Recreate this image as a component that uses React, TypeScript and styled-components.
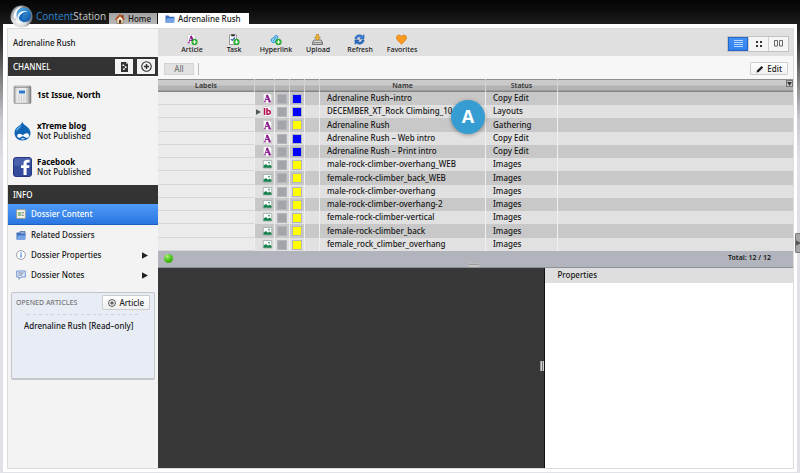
import React from "react";
import styled, { createGlobalStyle, css } from "styled-components";

const Global = createGlobalStyle`
  * { box-sizing: border-box; }
  html, body { margin: 0; padding: 0; }
  body {
    font-family: "Noto Sans", "Open Sans", sans-serif;
    font-size: 8px;
    font-weight: 500;
    line-height: 10px;
    color: #161616;
  }
  button {
    font: inherit;
    color: inherit;
    margin: 0;
    padding: 0;
    border: 0;
    background: none;
    cursor: pointer;
  }
  h2, p, ul { margin: 0; padding: 0; font: inherit; }
  ul { list-style: none; }
  svg { display: block; flex: none; }
`;

const Page = styled.div`
  position: relative;
  min-height: 100vh;
  display: flex;
  flex-direction: column;
  padding: 0 3px 1px;
  background: linear-gradient(#050505 0, #0c0c0c 10px, #1e1e1e 24px, #3a3a3a 45px, #8a8b8d 85px, #c9cace 120px, #dfe1e6 160px);
`;

const TopBar = styled.header`
  display: flex;
  align-items: flex-end;
  height: 24px;
  padding-left: 6px;
`;

const Brand = styled.div`
  display: flex;
  align-items: center;
  width: 100px;
  height: 16px;
  gap: 3px;
  font-family: "Open Sans", sans-serif;
  font-size: 10px;
  line-height: 14px;
  color: #c8c8c8;
  white-space: nowrap;
  svg { position: relative; z-index: 1; }
  b { font-weight: 500; color: #2e86cf; }
`;

const Tab = styled.button<{ $active?: boolean }>`
  display: flex;
  align-items: center;
  gap: 3px;
  height: 11px;
  white-space: nowrap;
  ${(p) =>
    p.$active
      ? css`width: 91px; margin-left: 1px; padding-left: 7px; background: #fff;`
      : css`width: 48px; padding-left: 6px; background: linear-gradient(#a2a2a2, #b8b8b8);`}
`;

const Frame = styled.div`
  flex: 1;
  display: flex;
  padding: 4px 3px 3px 4px;
  background: #fff;
`;

const Workspace = styled.div`
  flex: 1;
  min-width: 0;
  display: flex;
  border: 1px solid #dcdcdc;
`;

const Sidebar = styled.aside`
  width: 150px;
  flex: none;
  background: #f3f3f3;
`;

const SideTitle = styled.h2`
  height: 28px;
  padding-left: 5px;
  line-height: 27px;
`;

const SectionBar = styled.div`
  display: flex;
  align-items: center;
  gap: 4px;
  height: 19px;
  padding: 0 3px 0 5px;
  background: #333;
  color: #fff;
  h2 { flex: 1; }
`;

const BarButton = styled.button`
  display: grid;
  place-items: center;
  width: 18px;
  height: 15px;
  background: #f3f3f3;
`;

const Channels = styled.ul`
  height: 109px;
  border-top: 1px solid #fff;
`;

const Channel = styled.li`
  display: flex;
  align-items: center;
  gap: 5px;
  height: 36px;
  padding-left: 5px;
  b { display: block; color: #000; }
`;

const NavButton = styled.button<{ $selected?: boolean }>`
  display: flex;
  align-items: center;
  gap: 5px;
  width: 100%;
  height: 20px;
  padding: 0 10px 0 8px;
  text-align: left;
  span { flex: 1; }
  ${(p) =>
    p.$selected &&
    css`
      height: 21px;
      color: #fff;
      background: linear-gradient(#4f9bf8, #2a76e0);
      border-bottom: 1px solid #1f5fc0;
    `}
`;

const OpenedBox = styled.section`
  height: 88px;
  margin: 7px 3px 0;
  padding: 2px 4px;
  border: 1px solid #c4c6cc;
  border-bottom-width: 2px;
  border-radius: 2px;
  background: #e8ecf5;
  p { padding: 6px 8px; }
`;

const OpenedHead = styled.div`
  display: flex;
  align-items: center;
  justify-content: space-between;
  color: #777;
  font-size: 7px;
`;

const LightButton = styled.button`
  display: flex;
  align-items: center;
  justify-content: center;
  gap: 3px;
  height: 15px;
  padding: 0 5px;
  border: 1px solid #cdcdcd;
  border-radius: 1px;
  background: linear-gradient(#fff, #f0f0f0);
  color: #222;
  font-size: 8px;
`;

const Dashes = styled.div`
  margin: 4px 10px 0 11px;
  height: 1px;
  background: repeating-linear-gradient(90deg, #cdd0d8 0 3px, transparent 3px 6px);
`;

const Main = styled.main`
  flex: 1;
  min-width: 0;
  display: flex;
  flex-direction: column;
`;

const Toolbar = styled.div`
  display: flex;
  align-items: center;
  height: 27px;
  padding: 2px 4px 0 13px;
  background: #e0e0e0;
`;

const Tool = styled.button`
  display: flex;
  flex-direction: column;
  align-items: center;
  width: 42px;
  padding-top: 2px;
  font-size: 7px;
  line-height: 10px;
`;

const ViewSwitch = styled.div`
  display: flex;
  margin-left: auto;
  border: 1px solid #c3c3c3;
`;

const ViewButton = styled.button<{ $on?: boolean }>`
  display: grid;
  place-items: center;
  width: 20px;
  height: 14px;
  background: ${(p) => (p.$on ? "linear-gradient(#4492f5, #2f7ff0)" : "#f5f5f5")};
  box-shadow: ${(p) => (p.$on ? "inset 0 0 0 1px #2467c4" : "none")};
  & + & { border-left: 1px solid #cfcfcf; }
`;

const FilterBar = styled.div`
  display: flex;
  align-items: center;
  height: 23px;
  padding: 2px 5px 0 6px;
  background: #f7f7f7;
`;

const AllButton = styled.button`
  width: 30px;
  height: 12px;
  border: 1px solid #d3d3d3;
  background: #e2e2e2;
  color: #777;
  line-height: 10px;
`;

const Divider = styled.span`
  width: 1px;
  height: 12px;
  margin-left: 4px;
  background: #bdbdbd;
`;

const EditButton = styled(LightButton)`
  height: 13px;
  margin-left: auto;
`;

const TableArea = styled.div`
  position: relative;
`;

const Files = styled.table`
  width: 100%;
  table-layout: fixed;
  border-collapse: separate;
  border-spacing: 0;
  th, td { padding: 0; overflow: hidden; white-space: nowrap; }
  th {
    height: 13px;
    font-size: 7px;
    line-height: 9px;
    font-weight: 600;
    color: #333;
    background: linear-gradient(#8f8f8f 0 1px, #cacaca 1px 6px, #b3b3b3 7px 11px, #858585 12px);
    border-right: 1px solid #d3d3d3;
  }
  th:last-child { border-right: 0; text-align: right; }
`;

const Row = styled.tr`
  height: 13px;
  background: #e1e1e1;
  &:nth-child(odd) { background: #c8c8c8; }
  &:nth-child(4n + 3) { height: 14px; }
  td { border-right: 1px solid #efefef; line-height: 11px; }
  td:first-child { background: #ebebeb; border-bottom: 1px solid #d6d6d6; }
  td:last-child { border-right: 0; }
`;

const TextCell = styled.td`
  && { padding: 0 0 2px 7px; }
`;

const IconLine = styled.div`
  display: flex;
  align-items: center;
  justify-content: flex-end;
  gap: 1px;
  padding-right: 1px;
`;

const Swatch = styled.i<{ $color: string }>`
  display: block;
  width: 10px;
  height: 10px;
  margin: 0 auto;
  border: 1px solid #b4b4bc;
  background: ${(p) => p.$color};
`;

const MenuButton = styled.button`
  display: grid;
  place-items: center;
  width: 7px;
  height: 7px;
  margin: 0 0 4px auto;
  border: 1px solid #777;
  background: #c6c6c6;
`;

const Marker = styled.div`
  position: absolute;
  top: 21px;
  left: 293px;
  width: 34px;
  height: 34px;
  border-radius: 50%;
  background: #369dd2;
  box-shadow: 0 1px 4px rgba(0, 0, 0, 0.35);
  color: #fff;
  font-family: "Open Sans", sans-serif;
  font-size: 18px;
  font-weight: 700;
  line-height: 32px;
  text-align: center;
`;

const StatusBar = styled.div`
  position: relative;
  display: flex;
  align-items: flex-start;
  justify-content: space-between;
  height: 17px;
  padding: 2px 22px 0 6px;
  border-bottom: 1px solid #8d9096;
  background: #b1b4bd;
  span { font-size: 7px; font-weight: 600; }
`;

const Dot = styled.i`
  width: 9px;
  height: 9px;
  margin-top: 1px;
  border-radius: 50%;
  background: radial-gradient(circle at 35% 25%, #b0f080, #4cc61a 45%, #2b9406);
`;

const Grip = styled.i<{ $side?: boolean }>`
  position: absolute;
  ${(p) =>
    p.$side
      ? css`right: 0; top: 93px; width: 4px; height: 10px; background: linear-gradient(90deg, #999 1px, #ccc 1px 2px, #777 2px 3px, #ccc 3px);`
      : css`left: 49%; bottom: 0; width: 10px; height: 4px; background: linear-gradient(#ccc, #8e8e8e 2px, #c6c6c6 2px);`}
`;

const Lower = styled.div`
  flex: 1;
  display: flex;
  min-height: 200px;
`;

const Preview = styled.div`
  position: relative;
  flex: 387;
  background: #383838;
  border-right: 1px solid #111;
`;

const Properties = styled.section`
  flex: 248;
  background: #fff;
  h2 {
    height: 15px;
    padding-left: 12px;
    background: #dedede;
    line-height: 14px;
  }
`;

const EdgeHandle = styled.button`
  position: absolute;
  top: 233px;
  right: 0;
  display: grid;
  place-items: center;
  width: 5px;
  height: 20px;
  border: 1px solid #777;
  border-right: 0;
  border-radius: 2px 0 0 2px;
  background: #a6a6a6;
`;

const LogoMark = () => (
  <svg width="24" height="24" viewBox="0 0 24 24" aria-hidden="true">
    <defs>
      <radialGradient id="silver" cx="40%" cy="70%">
        <stop offset="0" stopColor="#fff" />
        <stop offset=".65" stopColor="#d4d7da" />
        <stop offset="1" stopColor="#777c82" />
      </radialGradient>
      <linearGradient id="azure" x2="1" y2="1">
        <stop offset="0" stopColor="#4fb4f0" />
        <stop offset="1" stopColor="#0a4fa0" />
      </linearGradient>
    </defs>
    <circle cx="12.500" cy="12.500" r="11" fill="url(#silver)" />
    <path d="M3 14C2 6 8 1 15 2c-6 1-9 6-8 14z" fill="#aeb5bb" />
    <path d="M4.500 14C4 7 9 2.500 14 2.700 9 4.500 6.500 8 7 15z" fill="#f8fafb" />
    <circle cx="15" cy="11" r="7.300" fill="url(#azure)" />
    <path d="M8.500 15C8 9 12 6 18.500 7.500c-4 .2-6.500 2-7 5.500 0 2 .8 3.800 2.500 5-3 0-5-1-5.500-3z" fill="#eaf6ff" />
    <path d="M10 14.500c.2-3.500 3-6 7-6-2.700 1-4 3-3.800 5 .2 1.700 1 3 2.300 4-3 .2-5-.8-5.500-3z" fill="#1566bb" />
  </svg>
);

const HomeMark = () => (
  <svg width="10" height="10" viewBox="0 0 10 10" aria-hidden="true">
    <path d="M2 5l3-3 3 3v4.500H2z" fill="#f2e4cd" stroke="#7b4a22" strokeWidth=".5" />
    <path d="M.5 5.500L5 1l4.500 4.500" fill="none" stroke="#b4501c" strokeWidth="1.500" />
    <path d="M7 1h1.500v3L7 2.500z" fill="#8c3a16" />
    <path d="M4 6h2.200v3.500H4z" fill="#5a3014" />
  </svg>
);

const FolderMark = ({ papers }: { papers?: boolean }) => (
  <svg width="10" height="9" viewBox="0 0 10 9" aria-hidden="true">
    {papers && <path d="M4 .4h5V5H4z" fill="#8fa9d8" stroke="#44609c" strokeWidth=".7" />}
    <path d="M.5 1.500h3l1 1.200h4.800v5.800H.5z" fill="#3d6cb8" />
    <path d="M1.800 4.200h8L8.800 8.700H.600z" fill="#75a4e6" />
  </svg>
);

const DocMark = () => (
  <svg width="9" height="10" viewBox="0 0 9 10" aria-hidden="true">
    <path d="M1 0h5l2 2v8H1z" fill="#333" />
    <path d="M6 0v2h2" fill="#999" />
    <path d="M2.500 2.500h1.500v1.500H2.500zM5 4.500h1.500V6H5zM3 6.500h1.500V8H3z" fill="#fff" />
    <path d="M4 3.500l2 1.500-2 2" fill="none" stroke="#fff" strokeWidth=".6" />
  </svg>
);

const PlusMark = ({ size }: { size: number }) => (
  <svg width={size} height={size} viewBox="0 0 10 10" fill="none" stroke="#2e2e2e" aria-hidden="true">
    <circle cx="5" cy="5" r="4.300" strokeWidth="1" />
    <path d="M5 2.700v4.600M2.700 5h4.600" strokeWidth="1.300" />
  </svg>
);

const IssueMark = () => (
  <svg width="19" height="20" viewBox="0 0 19 20" aria-hidden="true">
    <defs>
      <linearGradient id="metal" x2="1">
        <stop offset="0" stopColor="#999" />
        <stop offset=".15" stopColor="#e0e0e0" />
        <stop offset=".8" stopColor="#c9c9c9" />
        <stop offset="1" stopColor="#777" />
      </linearGradient>
    </defs>
    <rect x="1" y="1" width="17" height="17.500" rx="1" fill="url(#metal)" stroke="#8e8e8e" strokeWidth=".6" />
    <rect x="4" y="2" width="10" height="15" fill="#ececec" />
    <path d="M1.500 2.500h16" stroke="#8c8c8c" strokeWidth=".8" />
    <path d="M6 9.500v7M8.500 9.500v7M11 9.500v7M13.500 3.500v13M5 3.500v2" stroke="#cacaca" />
    <rect x="6" y="5.500" width="6" height="3" fill="#2f78cf" />
  </svg>
);

const DropMark = () => (
  <svg width="19" height="20" viewBox="0 0 19 20" aria-hidden="true">
    <path d="M9 .5c1 3 3 3.500 5 5.200 2 1.600 3.500 3.600 3.500 6.300 0 4.500-3.500 7.500-8 7.500S1.500 16.500 1.500 12c0-2.800 1.300-4.700 3.200-6.200C7 4 8.800 3.500 9 .5z" fill="#1065b6" />
    <path d="M3.500 8c1.500-2 4-2.500 5-4.500 0 3-3.500 4-5 7.500z" fill="#62aeea" />
    <path d="M9.800 14.200c1.200-1 2.600-2.200 4-2 1.800.2 2.600 1.600 2.200 3-.4 1.400-2 2-3.400 1.300-1-.5-1.800-1.400-2.800-1.200-1.600.3-2.300 1.700-4 1.400-1.500-.3-2-2-1.200-3.200 1.400-1.700 3.800-.6 5.200.7z" fill="#fff" />
    <path d="M7.500 17.700c1.500-.8 3-.7 4.600.1-1.500.9-3.200.9-4.600-.1z" fill="#fff" />
  </svg>
);

const FacebookMark = () => (
  <svg width="19" height="20" viewBox="0 0 19 20" aria-hidden="true">
    <rect x=".5" y=".5" width="18" height="19" rx="2.500" fill="#344a9c" stroke="#25377e" />
    <path d="M1 9Q9 9 18 5V2.500Q18 1 16 1H3Q1 1 1 3z" fill="#5469b4" opacity=".7" />
    <path d="M10.500 18v-7H8V8.300h2.500V6.500c0-2.600 1.500-3.800 4-3.800H16.500v2.800H15c-1 0-1.400.4-1.400 1.300v1.500h2.900l-.4 2.700h-2.500v7z" fill="#fff" />
  </svg>
);

const ContentMark = () => (
  <svg width="10" height="10" viewBox="0 0 10 10" aria-hidden="true">
    <rect x=".7" y=".7" width="8.600" height="8.600" fill="#f5f5ee" stroke="#a29c84" strokeWidth=".8" />
    <path d="M2 3h3v4H2z" fill="#8fbd85" />
    <path d="M5.500 3.500H8M5.500 5H7.500M5.500 6.500H8" stroke="#777" strokeWidth=".7" />
  </svg>
);

const InfoMark = () => (
  <svg width="10" height="10" viewBox="0 0 10 10" aria-hidden="true">
    <circle cx="5" cy="5" r="4.400" fill="#fff" stroke="#808690" strokeWidth=".8" />
    <path d="M5 4.300v3.200M5 2.200v1.200" stroke="#3478dc" strokeWidth="1.200" />
  </svg>
);

const NotesMark = () => (
  <svg width="10" height="10" viewBox="0 0 10 10" aria-hidden="true">
    <path d="M.7 1h8.600v6H5L3 9.300V7H.700z" fill="#dfeaff" stroke="#6a8cc8" strokeWidth=".9" />
    <path d="M2.300 3h5.400M2.300 5h4" stroke="#5f6b80" strokeWidth=".8" />
  </svg>
);

const Arrow = ({ small }: { small?: boolean }) => (
  <svg width={small ? 5 : 6} height={small ? 6 : 7} viewBox="0 0 6 7" aria-hidden="true">
    <path d="M0 .3l6 3.200-6 3.200z" fill={small ? "#555" : "#222"} />
  </svg>
);

const LetterA = () => (
  <>
    <path d="M4.900 1.800L8 9" fill="none" stroke="#8d1b8f" strokeWidth="1.900" />
    <path d="M5 2L2.800 8.700M3.500 6.500h3.300M1.700 8.900h2.400M6.300 8.900H9.300" fill="none" stroke="#8d1b8f" strokeWidth=".9" />
  </>
);

const AddBadge = () => (
  <>
    <circle cx="8.500" cy="8" r="2.900" fill="#24b32b" stroke="#128018" strokeWidth=".4" />
    <path d="M8.500 6.200v3.600M6.700 8h3.600" stroke="#fff" strokeWidth="1.100" />
  </>
);

const toolArt: Record<string, React.ReactNode> = {
  Article: (
    <>
      <path d="M1.500.5h6l2 2v8h-8z" fill="#fbfbfb" stroke="#c2c2c2" strokeWidth=".6" />
      <LetterA />
      <AddBadge />
    </>
  ),
  Task: (
    <>
      <path d="M1.500 1h7v9.500h-7z" fill="#fff" stroke="#777" strokeWidth=".7" />
      <path d="M3.200.3h3.600v2H3.200z" fill="#333" />
      <path d="M3 5l1.200 1.500L7 3.500" fill="none" stroke="#2456a8" strokeWidth="1.100" />
      <AddBadge />
    </>
  ),
  Hyperlink: (
    <>
      <path d="M1.500 7.500c-1-2 0-3.500 2-3.500l2-2.500c2-.5 3 1 2 2.800L5 8C3.500 9 2 8.800 1.500 7.500zM3 7l3.300-4" fill="#9bd3f2" stroke="#2794cf" strokeWidth="1" />
      <AddBadge />
    </>
  ),
  Upload: (
    <>
      <path d="M2 6h7l1.500 2.500v2H.5v-2z" fill="#d8d8d8" stroke="#555" strokeWidth=".8" />
      <path d="M1 8.700h9.500" stroke="#555" strokeWidth=".7" />
      <path d="M4.300.3h2.400v3h1.800L5.500 6.500 2.500 3.300h1.800z" fill="#f2b431" stroke="#a26b10" strokeWidth=".5" />
    </>
  ),
  Refresh: (
    <>
      <path d="M1 5C1 1 6-.3 8.500 2L10 .700V5H5.800l1.400-1.500C5.500 2.300 3 2.800 2.800 5z" fill="#3b83e0" stroke="#1d4e9d" strokeWidth=".6" />
      <path d="M10 6c0 4-5 5.300-7.500 3L1 10.300V6h4.200L3.800 7.500C5.500 8.700 8 8.200 8.200 6z" fill="#2d6cc4" stroke="#1d4e9d" strokeWidth=".6" />
    </>
  ),
  Favorites: (
    <path d="M5.500 10.200C2 7 .5 5.500.5 3.500.5 1 3.800 0 5.500 2.500 7.200 0 10.500 1 10.500 3.500c0 2-1.500 3.500-5 6.700z" fill="#fb9a1e" stroke="#c96d0c" strokeWidth=".6" />
  ),
};

const FileMark = ({ kind }: { kind: string }) => (
  <svg width="11" height="11" viewBox="0 0 11 11" aria-hidden="true">
    {kind === "image" ? (
      <>
        <path d="M1.300 1.500h8.400v7.500H1.300z" fill="#fbfdfc" stroke="#8fa39a" strokeWidth=".7" />
        <path d="M1.500 8.800V6.800L3.800 5l2.200 1.800 1.800-1.200 1.700 1.600v1.600z" fill="#14804c" />
        <circle cx="7" cy="3.600" r=".9" fill="#3a8f68" />
      </>
    ) : (
      <>
        <path d="M1.300.5h6.400l2 2v8H1.300z" fill="#fafafa" stroke="#bbb" strokeWidth=".5" />
        {kind === "layout" ? (
          <path d="M2.600 2v7M5 2v6.300h1.300c2.600 0 2.600-3.900 0-3.900H5" fill="none" stroke="#b80f52" strokeWidth="1.500" />
        ) : (
          <LetterA />
        )}
      </>
    )}
  </svg>
);

const files: [string, string, string, string][] = [
  ["article", "#0000ff", "Adrenaline Rush–intro", "Copy Edit"],
  ["layout", "#0000ff", "DECEMBER_XT_Rock Climbing_10_1", "Layouts"],
  ["article", "#ffff00", "Adrenaline Rush", "Gathering"],
  ["article", "#0000ff", "Adrenaline Rush – Web intro", "Copy Edit"],
  ["article", "#0000ff", "Adrenaline Rush – Print intro", "Copy Edit"],
  ["image", "#ffff00", "male-rock-climber-overhang_WEB", "Images"],
  ["image", "#ffff00", "female-rock-climber_back_WEB", "Images"],
  ["image", "#ffff00", "male-rock-climber-overhang", "Images"],
  ["image", "#ffff00", "male-rock-climber-overhang-2", "Images"],
  ["image", "#ffff00", "female-rock-climber-vertical", "Images"],
  ["image", "#ffff00", "female-rock-climber_back", "Images"],
  ["image", "#ffff00", "female_rock_climber_overhang", "Images"],
];

const channels = [
  { name: "1st Issue, North", state: "", art: <IssueMark /> },
  { name: "xTreme blog", state: "Not Published", art: <DropMark /> },
  { name: "Facebook", state: "Not Published", art: <FacebookMark /> },
];

const navItems = [
  { name: "Dossier Content", art: <ContentMark />, selected: true },
  { name: "Related Dossiers", art: <FolderMark papers /> },
  { name: "Dossier Properties", art: <InfoMark />, more: true },
  { name: "Dossier Notes", art: <NotesMark />, more: true },
];

export default function App() {
  return (
    <Page>
      <Global />
      <TopBar>
        <Brand>
          <LogoMark />
          <span><b>Content</b>Station</span>
        </Brand>
        <Tab><HomeMark />Home</Tab>
        <Tab $active><FolderMark />Adrenaline Rush</Tab>
      </TopBar>
      <Frame>
        <Workspace>
          <Sidebar>
            <SideTitle>Adrenaline Rush</SideTitle>
            <SectionBar>
              <h2>CHANNEL</h2>
              <BarButton aria-label="Channel document"><DocMark /></BarButton>
              <BarButton aria-label="Add channel"><PlusMark size={11} /></BarButton>
            </SectionBar>
            <Channels>
              {channels.map((c) => (
                <Channel key={c.name}>
                  {c.art}
                  <div><b>{c.name}</b>{c.state}</div>
                </Channel>
              ))}
            </Channels>
            <SectionBar><h2>INFO</h2></SectionBar>
            <ul>
              {navItems.map((n) => (
                <li key={n.name}>
                  <NavButton $selected={n.selected}>
                    {n.art}
                    <span>{n.name}</span>
                    {n.more && <Arrow />}
                  </NavButton>
                </li>
              ))}
            </ul>
            <OpenedBox>
              <OpenedHead>
                <h2>OPENED ARTICLES</h2>
                <LightButton><PlusMark size={8} />Article</LightButton>
              </OpenedHead>
              <Dashes />
              <p>Adrenaline Rush [Read–only]</p>
            </OpenedBox>
          </Sidebar>
          <Main>
            <Toolbar>
              {Object.keys(toolArt).map((name) => (
                <Tool key={name}>
                  <svg width="12" height="11" viewBox="0 0 12 11" aria-hidden="true">{toolArt[name]}</svg>
                  {name}
                </Tool>
              ))}
              <ViewSwitch>
                <ViewButton $on aria-label="List view">
                  <svg width="9" height="8" viewBox="0 0 9 8"><path d="M0 .5h9M0 2.500h9M0 4.500h9M0 6.500h9" stroke="#b9d8ff" /></svg>
                </ViewButton>
                <ViewButton aria-label="Thumbnail view">
                  <svg width="6" height="6" viewBox="0 0 6 6"><path d="M0 0h2v2H0zM4 0h2v2H4zM0 4h2v2H0zM4 4h2v2H4z" fill="#333" /></svg>
                </ViewButton>
                <ViewButton aria-label="Page view">
                  <svg width="9" height="7" viewBox="0 0 9 7"><path d="M.5.5h3v5.500h-3zM5.500.5h3v5.500h-3z" fill="none" stroke="#666" /></svg>
                </ViewButton>
              </ViewSwitch>
            </Toolbar>
            <FilterBar>
              <AllButton>All</AllButton>
              <Divider />
              <EditButton>
                <svg width="8" height="8" viewBox="0 0 8 8" aria-hidden="true">
                  <path d="M.5 7.500l.7-2.300L5.500.9l1.700 1.600L2.800 6.900z" fill="#1c1c1c" />
                </svg>
                Edit
              </EditButton>
            </FilterBar>
            <TableArea>
              <Files>
                <colgroup>
                  <col width="97" /><col width="20" /><col width="15" /><col width="15" />
                  <col width="15" /><col width="166" /><col width="72" /><col />
                </colgroup>
                <thead>
                  <tr>
                    <th>Labels</th><th /><th /><th /><th /><th>Name</th><th>Status</th>
                    <th>
                      <MenuButton aria-label="Choose columns">
                        <svg width="5" height="4" viewBox="0 0 5 4"><path d="M0 0h5L2.500 4z" fill="#333" /></svg>
                      </MenuButton>
                    </th>
                  </tr>
                </thead>
                <tbody>
                  {files.map(([kind, color, name, status]) => (
                    <Row key={name}>
                      <td />
                      <td><IconLine>{kind === "layout" && <Arrow small />}<FileMark kind={kind} /></IconLine></td>
                      <td><Swatch $color="#a3a6a8" /></td>
                      <td><Swatch $color={color} /></td>
                      <td />
                      <TextCell>{name}</TextCell>
                      <TextCell>{status}</TextCell>
                      <td />
                    </Row>
                  ))}
                </tbody>
              </Files>
              <Marker>A</Marker>
            </TableArea>
            <StatusBar>
              <Dot />
              <span>Total: 12 / 12</span>
              <Grip />
            </StatusBar>
            <Lower>
              <Preview><Grip $side /></Preview>
              <Properties><h2>Properties</h2></Properties>
            </Lower>
          </Main>
        </Workspace>
      </Frame>
      <EdgeHandle aria-label="Expand panel"><Arrow small /></EdgeHandle>
    </Page>
  );
}
